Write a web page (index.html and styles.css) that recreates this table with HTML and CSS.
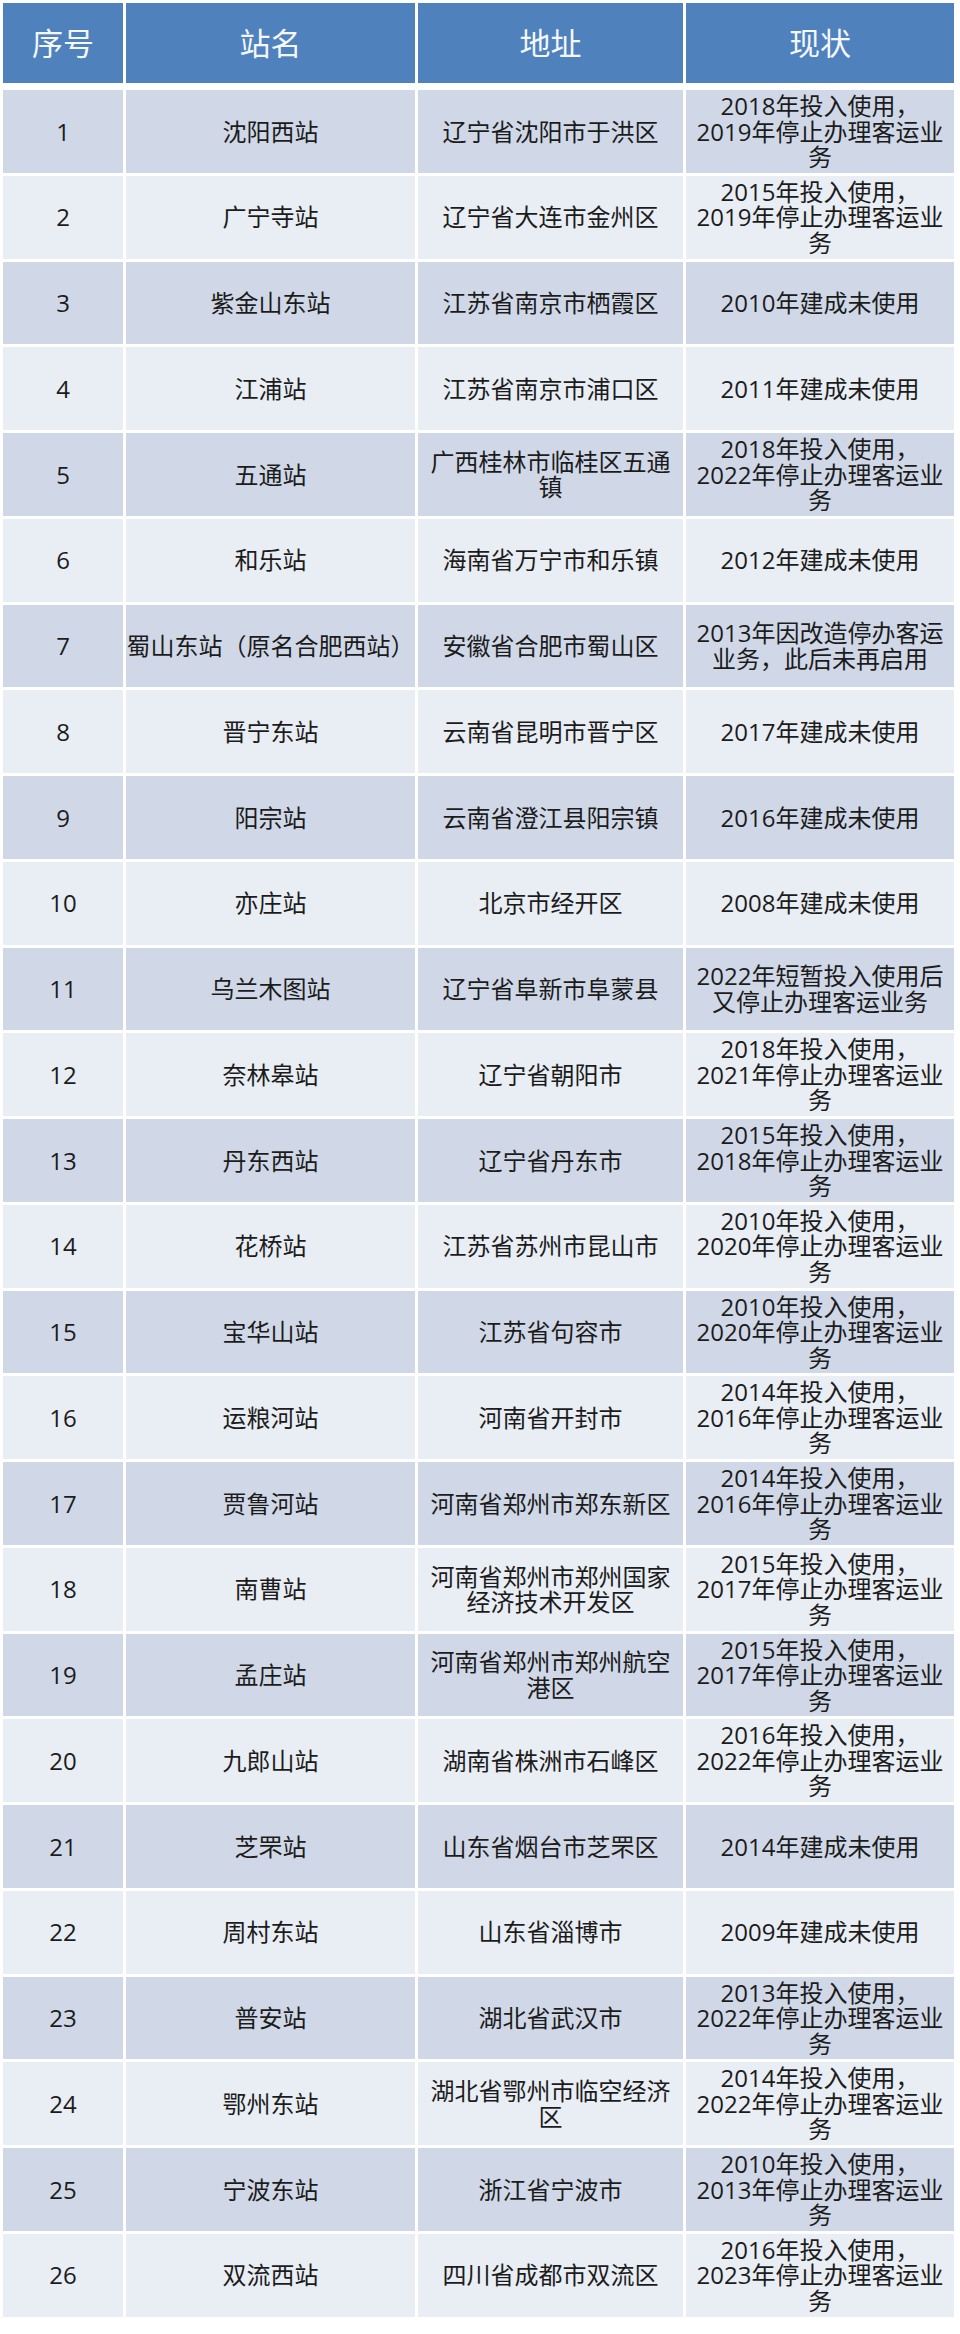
FILE: index.html
```html
<!DOCTYPE html>
<html lang="zh-CN">
<head>
<meta charset="utf-8">
<title>停用车站</title>
<link rel="stylesheet" href="styles.css">
</head>
<body>
<div class="table">
  <div class="thead">
    <div class="th">序号</div>
    <div class="th">站名</div>
    <div class="th">地址</div>
    <div class="th">现状</div>
  </div>
  <div class="tbody">
    <div class="row"><div class="td">1</div><div class="td name">沈阳西站</div><div class="td">辽宁省沈阳市于洪区</div><div class="td status">2018年投入使用，2019年停止办理客运业务</div></div>
    <div class="row"><div class="td">2</div><div class="td name">广宁寺站</div><div class="td">辽宁省大连市金州区</div><div class="td status">2015年投入使用，2019年停止办理客运业务</div></div>
    <div class="row"><div class="td">3</div><div class="td name">紫金山东站</div><div class="td">江苏省南京市栖霞区</div><div class="td status">2010年建成未使用</div></div>
    <div class="row"><div class="td">4</div><div class="td name">江浦站</div><div class="td">江苏省南京市浦口区</div><div class="td status">2011年建成未使用</div></div>
    <div class="row"><div class="td">5</div><div class="td name">五通站</div><div class="td">广西桂林市临桂区五通镇</div><div class="td status">2018年投入使用，2022年停止办理客运业务</div></div>
    <div class="row"><div class="td">6</div><div class="td name">和乐站</div><div class="td">海南省万宁市和乐镇</div><div class="td status">2012年建成未使用</div></div>
    <div class="row"><div class="td">7</div><div class="td name">蜀山东站（原名合肥西站）</div><div class="td">安徽省合肥市蜀山区</div><div class="td status">2013年因改造停办客运业务，此后未再启用</div></div>
    <div class="row"><div class="td">8</div><div class="td name">晋宁东站</div><div class="td">云南省昆明市晋宁区</div><div class="td status">2017年建成未使用</div></div>
    <div class="row"><div class="td">9</div><div class="td name">阳宗站</div><div class="td">云南省澄江县阳宗镇</div><div class="td status">2016年建成未使用</div></div>
    <div class="row"><div class="td">10</div><div class="td name">亦庄站</div><div class="td">北京市经开区</div><div class="td status">2008年建成未使用</div></div>
    <div class="row"><div class="td">11</div><div class="td name">乌兰木图站</div><div class="td">辽宁省阜新市阜蒙县</div><div class="td status">2022年短暂投入使用后又停止办理客运业务</div></div>
    <div class="row"><div class="td">12</div><div class="td name">奈林皋站</div><div class="td">辽宁省朝阳市</div><div class="td status">2018年投入使用，2021年停止办理客运业务</div></div>
    <div class="row"><div class="td">13</div><div class="td name">丹东西站</div><div class="td">辽宁省丹东市</div><div class="td status">2015年投入使用，2018年停止办理客运业务</div></div>
    <div class="row"><div class="td">14</div><div class="td name">花桥站</div><div class="td">江苏省苏州市昆山市</div><div class="td status">2010年投入使用，2020年停止办理客运业务</div></div>
    <div class="row"><div class="td">15</div><div class="td name">宝华山站</div><div class="td">江苏省句容市</div><div class="td status">2010年投入使用，2020年停止办理客运业务</div></div>
    <div class="row"><div class="td">16</div><div class="td name">运粮河站</div><div class="td">河南省开封市</div><div class="td status">2014年投入使用，2016年停止办理客运业务</div></div>
    <div class="row"><div class="td">17</div><div class="td name">贾鲁河站</div><div class="td">河南省郑州市郑东新区</div><div class="td status">2014年投入使用，2016年停止办理客运业务</div></div>
    <div class="row"><div class="td">18</div><div class="td name">南曹站</div><div class="td">河南省郑州市郑州国家经济技术开发区</div><div class="td status">2015年投入使用，2017年停止办理客运业务</div></div>
    <div class="row"><div class="td">19</div><div class="td name">孟庄站</div><div class="td">河南省郑州市郑州航空港区</div><div class="td status">2015年投入使用，2017年停止办理客运业务</div></div>
    <div class="row"><div class="td">20</div><div class="td name">九郎山站</div><div class="td">湖南省株洲市石峰区</div><div class="td status">2016年投入使用，2022年停止办理客运业务</div></div>
    <div class="row"><div class="td">21</div><div class="td name">芝罘站</div><div class="td">山东省烟台市芝罘区</div><div class="td status">2014年建成未使用</div></div>
    <div class="row"><div class="td">22</div><div class="td name">周村东站</div><div class="td">山东省淄博市</div><div class="td status">2009年建成未使用</div></div>
    <div class="row"><div class="td">23</div><div class="td name">普安站</div><div class="td">湖北省武汉市</div><div class="td status">2013年投入使用，2022年停止办理客运业务</div></div>
    <div class="row"><div class="td">24</div><div class="td name">鄂州东站</div><div class="td">湖北省鄂州市临空经济区</div><div class="td status">2014年投入使用，2022年停止办理客运业务</div></div>
    <div class="row"><div class="td">25</div><div class="td name">宁波东站</div><div class="td">浙江省宁波市</div><div class="td status">2010年投入使用，2013年停止办理客运业务</div></div>
    <div class="row"><div class="td">26</div><div class="td name">双流西站</div><div class="td">四川省成都市双流区</div><div class="td status">2016年投入使用，2023年停止办理客运业务</div></div>
  </div>
</div>
</body>
</html>
```

FILE: styles.css
```css
html, body {
  margin: 0;
  padding: 0;
  background: #ffffff;
}

body {
  font-family: "Open Sans", "Noto Sans CJK SC", sans-serif;
  color: #1c1c1c;
}

.table {
  width: 954px;
  padding: 3px 0 0 3px;
  box-sizing: border-box;
  display: flex;
  flex-direction: column;
  gap: 7px;
}

.thead,
.row {
  display: grid;
  grid-template-columns: 120px 289px 265px 268px;
  column-gap: 3px;
}

.thead {
  height: 80px;
}

.th {
  background: #4f81bd;
  color: #f4f7fc;
  font-size: 31px;
  line-height: 1;
  display: flex;
  align-items: center;
  justify-content: center;
}

.tbody {
  display: flex;
  flex-direction: column;
  gap: 3px;
}

.row {
  height: 82.75px;
}

.row:nth-child(odd) .td {
  background: #d0d8e8;
}

.row:nth-child(even) .td {
  background: #e9edf4;
}

.td {
  font-size: 24px;
  line-height: 25.5px;
  display: flex;
  align-items: center;
  justify-content: center;
  text-align: center;
  padding: 0 6px;
}

.td.name {
  padding: 0;
  white-space: nowrap;
}

.td.status {
  padding: 0 9px;
}
```
